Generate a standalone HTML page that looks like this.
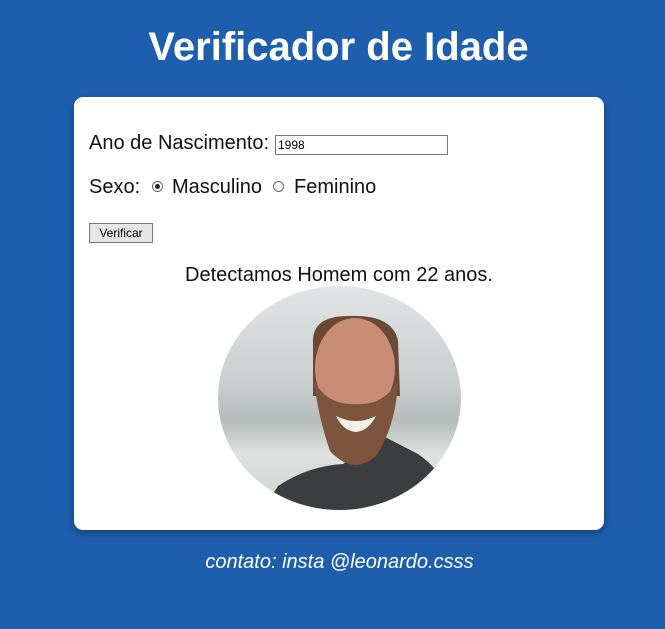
<!DOCTYPE html>
<html><head><style>
html,body{margin:0;padding:0}
body{width:665px;height:629px;background:#1e5fad;font-family:"Liberation Sans",Arial,sans-serif;position:relative;overflow:hidden}
h1{position:absolute;top:25px;left:6px;width:665px;text-align:center;margin:0;color:#fff;font-size:40px;font-weight:bold;line-height:45px}
.card{position:absolute;left:74px;top:97px;width:530px;height:433px;background:#fff;border-radius:9px;box-shadow:0 3px 8px rgba(0,0,0,.35)}
.t{position:absolute;font-size:20px;color:#111;line-height:22px;white-space:nowrap}
input[type=text]{position:absolute;left:201px;top:38px;width:173px;height:20px;box-sizing:border-box;border:1px solid #777;font:12px "Liberation Sans",sans-serif;padding:1px 2px;margin:0}
.r{position:absolute;width:11px;height:11px;border:1px solid #666;border-radius:50%;box-sizing:border-box;background:#fff}
.r.on::after{content:"";position:absolute;left:2px;top:2px;width:5px;height:5px;border-radius:50%;background:#222}
.btn{position:absolute;left:15px;top:126px;width:64px;height:20px;box-sizing:border-box;border:1px solid #777;background:#e6e6e6;font-size:12px;text-align:center;line-height:18px;color:#000}
.foot{position:absolute;top:551px;left:7px;width:665px;text-align:center;color:#fff;font-style:italic;font-size:20px}
</style></head><body>
<h1>Verificador de Idade</h1>
<div class="card">
<div class="t" style="left:15px;top:35px">Ano de Nascimento:</div>
<input type="text" value="1998">
<div class="t" style="left:15px;top:79px">Sexo:</div>
<div class="r on" style="left:78px;top:84px"></div>
<div class="t" style="left:98px;top:79px">Masculino</div>
<div class="r" style="left:199px;top:84px"></div>
<div class="t" style="left:220px;top:79px">Feminino</div>
<div class="btn">Verificar</div>
<div class="t" style="left:0;width:530px;text-align:center;top:167px">Detectamos Homem com 22 anos.</div>
<svg style="position:absolute;left:144px;top:189px" width="243" height="224" viewBox="0 0 243 224">
<defs>
<clipPath id="c"><ellipse cx="121.5" cy="112" rx="121.5" ry="112"/></clipPath>
<linearGradient id="bg" x1="0" y1="0" x2="0" y2="1"><stop offset="0" stop-color="#e2e4e6"/><stop offset=".45" stop-color="#c9cdcd"/><stop offset=".6" stop-color="#b4bbb9"/><stop offset=".75" stop-color="#dfe1e1"/><stop offset="1" stop-color="#d0d3d3"/></linearGradient>
</defs>
<g clip-path="url(#c)">
<rect width="243" height="224" fill="url(#bg)"/>
<path d="M45 224 L60 200 Q90 180 125 178 L165 150 L200 168 Q225 185 243 224 Z" fill="#3c3d40"/>
<path d="M95 55 Q95 30 130 30 Q175 28 180 55 L182 110 L95 110 Z" fill="#6b4a35"/>
<ellipse cx="137" cy="82" rx="40" ry="50" fill="#c98c74"/>
<path d="M96 95 Q100 130 112 165 Q135 190 158 170 Q178 140 180 95 Q165 120 138 118 Q110 120 96 95 Z" fill="#7d543d"/>
<path d="M118 130 Q138 140 158 130 Q150 145 138 146 Q125 145 118 130 Z" fill="#f4efe7"/>
</g>
</svg>
</div>
<div class="foot">contato: insta @leonardo.csss</div>
</body></html>
